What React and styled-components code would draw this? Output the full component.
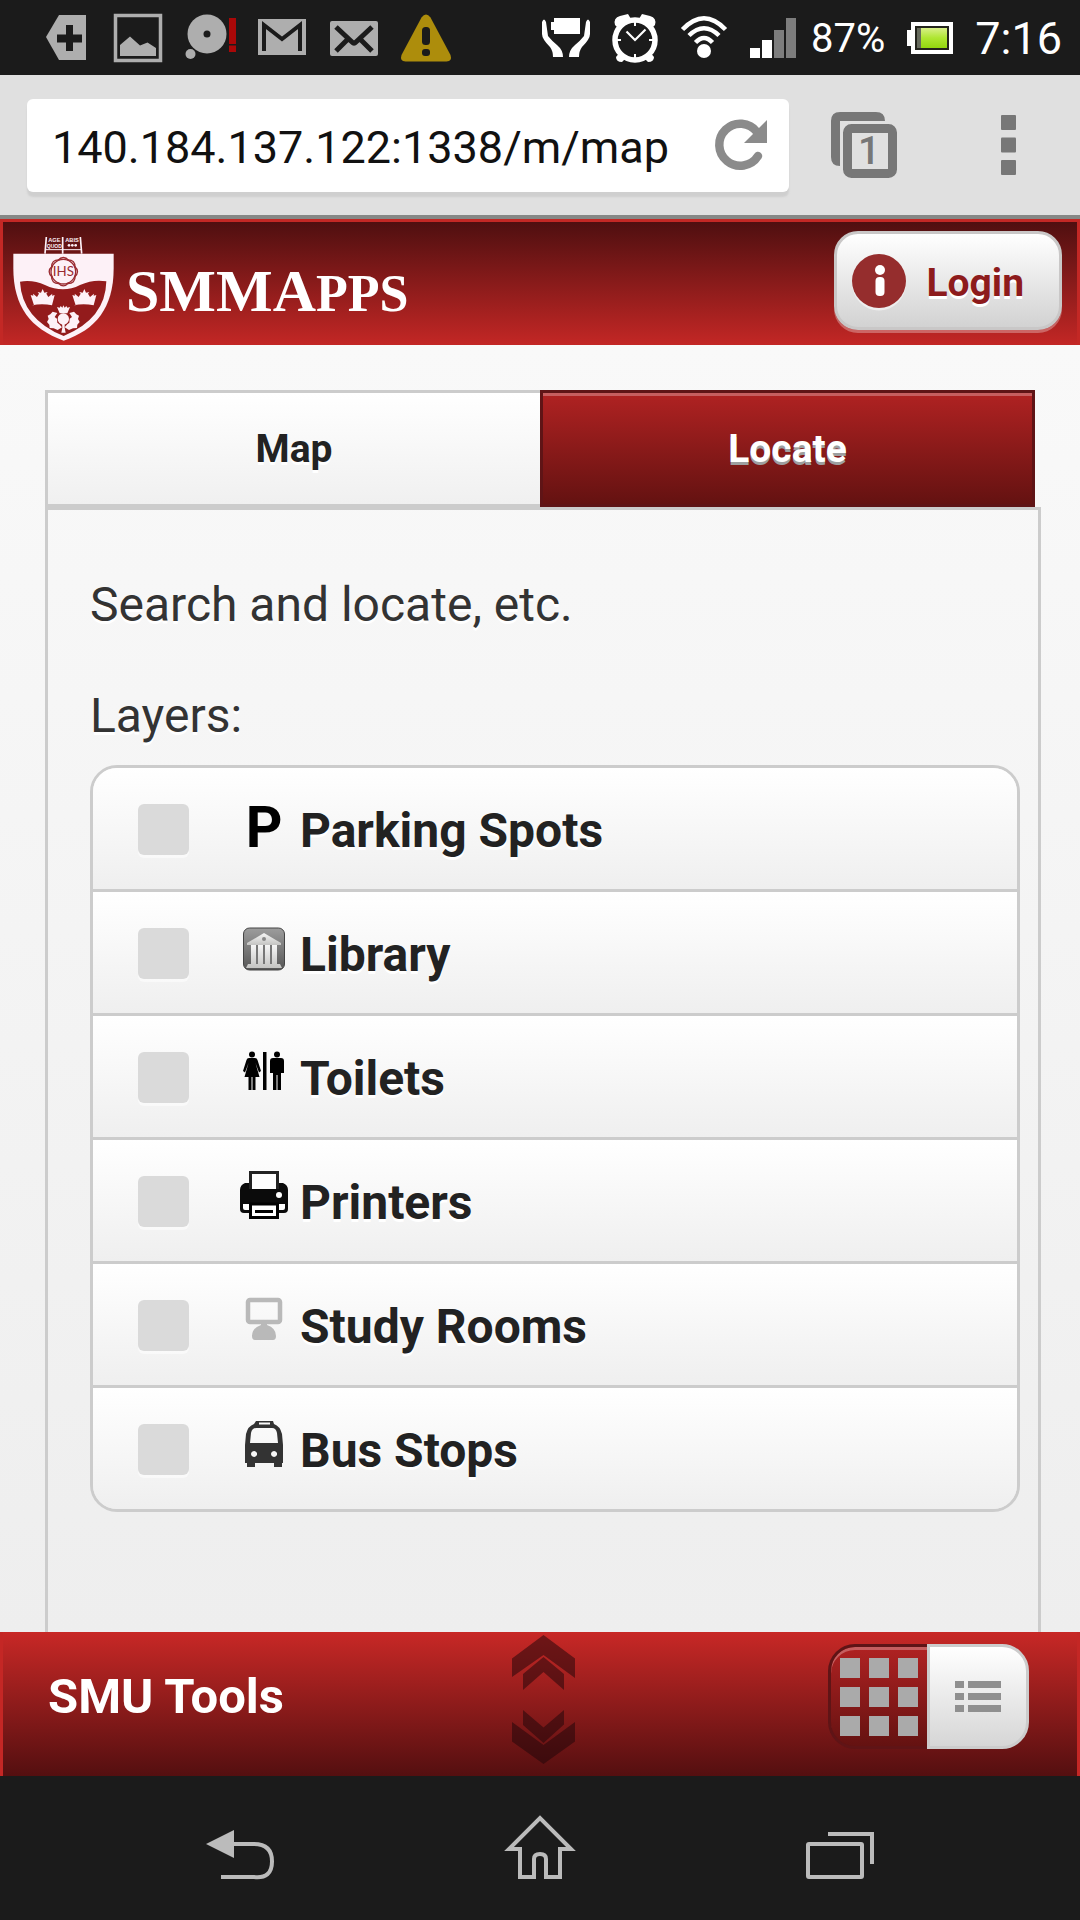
import React, { useState } from "react";
import styled, { createGlobalStyle, css } from "styled-components";

const GlobalStyle = createGlobalStyle`
  *, *::before, *::after { box-sizing: border-box; }
  body { margin: 0; background: #1b1b1b; font-family: Roboto, "Liberation Sans", sans-serif; }
  button, input { font: inherit; }
  button { border: 0; padding: 0; background: none; cursor: pointer; }
  svg { display: block; flex: none; overflow: visible; }
`;

const Screen = styled.div`
  display: flex;
  flex-direction: column;
  min-height: 100vh;
`;

/* ---------- system status bar ---------- */

const StatusBar = styled.header`
  display: flex;
  align-items: center;
  justify-content: space-between;
  height: 75px;
  padding: 0 18px 0 42px;
  background: #1b1b1b;
  color: #fff;
`;

const StatusGroup = styled.div`
  display: flex;
  align-items: center;
  gap: ${(p) => p.$gap}px;
`;

const StatusText = styled.span`
  font-size: ${(p) => p.$size}px;
  line-height: 60px;
  padding-top: 3px;
`;

/* ---------- browser bar ---------- */

const BrowserBar = styled.div`
  display: flex;
  align-items: center;
  height: 144px;
  padding: 0 64px 0 27px;
  background: #e0e0e0;
  border-bottom: 4px solid #868886;
`;

const UrlBox = styled.form`
  display: flex;
  align-items: center;
  flex: 1;
  min-width: 0;
  height: 93px;
  padding: 2px 22px 0 25px;
  margin-right: 42px;
  border-radius: 6px;
  background: #fff;
  box-shadow: 0 5px 2px #cfcfcf;
`;

const UrlInput = styled.input`
  flex: 1;
  min-width: 0;
  padding: 3px 0 0;
  border: 0;
  outline: 0;
  background: transparent;
  color: #111;
  font-size: 45px;
`;

const MenuButton = styled.button`
  margin-left: 104px;
`;

/* ---------- site header ---------- */

const SiteHeader = styled.header`
  display: flex;
  align-items: flex-start;
  justify-content: space-between;
  height: 126px;
  padding: 9px 15px 0 9px;
  border: 3px solid #c32825;
  border-bottom: 0;
  background: linear-gradient(#4f0f10, #c32725);
`;

const Brand = styled.a`
  display: flex;
  align-items: center;
  gap: 10px;
  padding-top: 5px;
  color: #fff;
  text-decoration: none;
`;

const BrandName = styled.span`
  font-family: "Liberation Serif", serif;
  font-weight: 700;
  font-size: 60px;
  line-height: 60px;
  padding-top: 6px;
`;

const SmallCaps = styled.span`
  font-size: 52px;
  text-transform: uppercase;
`;

const LoginButton = styled.button`
  display: flex;
  align-items: center;
  gap: 20px;
  height: 99px;
  padding: 4px 35px 0 15px;
  border: 3px solid #c9c7c7;
  border-radius: 24px;
  background: linear-gradient(#fff, #d2d2d2);
  box-shadow: 0 3px 0 rgba(255, 255, 255, 0.3);
  color: #8d1b1c;
  font-size: 39px;
  font-weight: 700;
  text-shadow: 0 3px 0 #fff;
`;

/* ---------- page ---------- */

const Page = styled.main`
  display: flex;
  flex-direction: column;
  flex: 1;
  padding-top: 45px;
  background: linear-gradient(#f9f9f9, #eee);
`;

const Tabs = styled.div`
  display: grid;
  grid-template-columns: 1fr 1fr;
  margin: 0 45px;
`;

const Tab = styled.button`
  height: 117px;
  border: 3px solid #ccc;
  border-right: 0;
  background: linear-gradient(#fff, #f0f0f0);
  color: #222;
  font-size: 39px;
  font-weight: 700;
  text-shadow: 0 3px 0 #fff;
  ${(p) =>
    p.$active &&
    css`
      border: 3px solid #5f1416;
      background: linear-gradient(#b02222, #641211);
      box-shadow: inset 0 3px 0 #c65e5f;
      color: #fff;
      text-shadow: 0 3px 0 #9d9fa0;
    `}
`;

const Panel = styled.section`
  flex: 1;
  margin: 0 39px 0 45px;
  padding: 63px 18px 48px 42px;
  border: 3px solid #ccc;
  border-bottom: 0;
`;

const Note = styled.p`
  margin: 0 0 ${(p) => p.$after}px;
  color: #333;
  font-size: 48px;
  line-height: 63px;
  text-shadow: 0 3px 0 #fff;
`;

const LayerList = styled.ul`
  margin: 0;
  padding: 0;
  overflow: hidden;
  list-style: none;
  border: 3px solid #ccc;
  border-radius: 27px;
`;

const LayerItem = styled.li`
  background: linear-gradient(#fff, #efefef);
  & + & {
    border-top: 3px solid #ccc;
  }
`;

const LayerLabel = styled.label`
  display: flex;
  align-items: center;
  gap: 51px;
  padding: 31px 45px 30px;
  color: #222;
  font-size: 48px;
  font-weight: 700;
  line-height: 57px;
  text-shadow: 0 3px 0 #fff;
`;

const LayerText = styled.span`
  display: flex;
  align-items: baseline;
  gap: 12px;
`;

const IconSlot = styled.span`
  display: inline-flex;
  justify-content: center;
  width: 48px;
`;

const ParkingMark = styled.span`
  color: #000;
  font-size: 57px;
  line-height: 57px;
  text-shadow: none;
`;

const Checkbox = styled.input`
  appearance: none;
  flex: none;
  width: 51px;
  height: 51px;
  margin: 0;
  border-radius: 6px;
  background: #dadada;
  box-shadow: 0 3px 0 rgba(255, 255, 255, 0.5);
  &:checked {
    background: #8d1b1c;
  }
`;

/* ---------- tools bar ---------- */

const ToolsBar = styled.footer`
  display: grid;
  grid-template-columns: 1fr auto 1fr;
  align-items: flex-start;
  height: 144px;
  padding: 0 48px 0 45px;
  border: solid #c42725;
  border-width: 0 3px;
  background: linear-gradient(#c82826, #540f10);
`;

const ToolsTitle = styled.h2`
  margin: 0;
  padding-top: 36px;
  color: #fff;
  font-size: 49px;
  line-height: 57px;
`;

const Expander = styled.button`
  padding: 3px 0 0 10px;
`;

const Toggle = styled.div`
  display: flex;
  justify-self: end;
  padding-top: 12px;
`;

const ToggleButton = styled.button`
  display: grid;
  place-items: center;
  height: 105px;
  border: 3px solid #ccc;
  width: 102px;
  border-radius: 0 27px 27px 0;
  background: linear-gradient(#fff, #d6d6d6);
  ${(p) =>
    p.$active &&
    css`
      width: 99px;
      border-color: #5f1416;
      border-right: 0;
      border-radius: 27px 0 0 27px;
      background: linear-gradient(#b02222, #641211);
      box-shadow: inset 0 3px 0 #c65e5f;
    `}
`;

/* ---------- system navigation ---------- */

const NavBar = styled.nav`
  display: grid;
  grid-template-columns: repeat(3, 1fr);
  justify-items: center;
  height: 144px;
  padding: 0 90px;
  background: #1b1b1b;
`;

/* ---------- icons ---------- */

const StatusSvg = ({ children, fill = "#aeaeae" }) => (
  <svg width="48" height="48" viewBox="0 0 48 48" fill={fill} aria-hidden="true">
    {children}
  </svg>
);

const TagIcon = () => (
  <StatusSvg>
    <path d="M4 23 17 1h27v45H17z" />
    <path d="M24 11h7v9.500h9v8h-9V37h-7v-8.500h-9v-8h9z" fill="#1b1b1b" />
  </StatusSvg>
);
const PictureIcon = () => (
  <StatusSvg>
    <path d="M1.500 1.500h45v45h-45z" fill="none" stroke="#aeaeae" strokeWidth="3.500" />
    <path d="M6 31l10-8.500 10 9 7.500-3L42 34v8H6z" />
  </StatusSvg>
);
const VoicemailIcon = () => (
  <StatusSvg>
    <circle cx="21" cy="20" r="19.500" />
    <circle cx="4.500" cy="40" r="5" />
    <circle cx="21" cy="20" r="3.500" fill="#1b1b1b" />
    <path d="M43 4h7v26h-7zM43 31.500h7V38h-7z" fill="#a90808" />
  </StatusSvg>
);
const GmailIcon = () => (
  <StatusSvg>
    <path d="M0 5h48v36H0z" />
    <path d="M6 37V11l18 14 18-14v26" fill="none" stroke="#1b1b1b" strokeWidth="4" />
  </StatusSvg>
);
const MailIcon = () => (
  <StatusSvg>
    <rect y="7" width="48" height="35" rx="2" />
    <path d="M6 13l16 15q2 2 4 0l16-15M6 37l12-12M42 37L30 25" fill="none" stroke="#1b1b1b" strokeWidth="5" />
  </StatusSvg>
);
const WarningIcon = () => (
  <StatusSvg fill="#ad8d0c">
    <path d="M19.500 3.500q4.500-6 9 0L48.500 41q2 6-4 6.500h-41q-6-.5-4-6.500z" />
    <rect x="20" y="13" width="8" height="18" rx="3.500" fill="#1b1b1b" />
    <rect x="20" y="35" width="8" height="7" rx="3" fill="#1b1b1b" />
  </StatusSvg>
);
const HandsIcon = () => (
  <StatusSvg fill="#fff">
    <path d="M12 4h26v16H12v-4H9V8h3z" />
    <path d="M0 8q2-5 4 0l2 14q4 5 9 9 6 5 6 12H11q0-6-3-10-8-8-8-13z" />
    <path d="M48 8q-2-5-4 0l-2 14q-4 5-9 9-6 5-6 12h10q0-6 3-10 8-8 8-13z" />
  </StatusSvg>
);
const AlarmIcon = () => (
  <StatusSvg fill="#fff">
    <path d="M4 11Q2 4 9 2l8-2 3 5L6 13zM44 11q2-7-5-9l-8-2-3 5 14 8zM5 43l5-6 7 5-6 6q-6 0-6-5zM43 43l-5-6-7 5 6 6q6 0 6-5z" />
    <circle cx="24" cy="26" r="20" fill="#1b1b1b" stroke="#fff" strokeWidth="5.500" />
    <path d="M24 8v4M24 40v4M6 26h4M38 26h4" stroke="#fff" strokeWidth="2" />
    <path d="M15.500 17.500 24 26l10.500-10.500" fill="none" stroke="#fff" strokeWidth="2.200" />
  </StatusSvg>
);
const WifiIcon = () => (
  <StatusSvg fill="none">
    <g stroke="#fff" strokeWidth="4.500">
      <path d="M2.500 15.500Q24-7 45.500 15.500" />
      <path d="M9 21.500q15-14.500 30 0" />
      <path d="M15.500 28.500q8.500-9 17 0" />
    </g>
    <circle cx="24" cy="37" r="7" fill="#fff" />
  </StatusSvg>
);
const SignalIcon = () => (
  <StatusSvg fill="#fff">
    <path d="M1 34h10v10H1zM13 26h10v18H13z" />
    <path d="M25 16h10v28H25zM37 4h10v40H37z" fill="#7d7d7d" />
  </StatusSvg>
);
const BatteryIcon = () => (
  <StatusSvg fill="#fff">
    <defs>
      <linearGradient id="charge" x1="0" y1="0" x2="0" y2="1">
        <stop offset="0" stopColor="#d8ef88" />
        <stop offset="0.5" stopColor="#aee631" />
        <stop offset="1" stopColor="#93d60e" />
      </linearGradient>
    </defs>
    <path d="M5 8h42v32H5v-8H1V16h4z" />
    <path d="M9 12h34v24H9z" fill="#23231c" />
    <path d="M11 14h4v20h-4z" fill="#666a5c" />
    <path d="M15 14h26v20H15z" fill="url(#charge)" />
  </StatusSvg>
);

const ReloadIcon = () => (
  <svg width="52" height="52" viewBox="0 0 52 52" aria-hidden="true">
    <path d="M42 12A21 21 0 1 0 43 36" fill="none" stroke="#8b8b8b" strokeWidth="8.500" strokeLinecap="round" />
    <path d="M52 0v23H29z" fill="#8b8b8b" />
  </svg>
);
const TabsIcon = () => (
  <svg width="66" height="66" viewBox="0 0 66 66" aria-hidden="true">
    <path d="M0 9Q0 0 9 0h36q9 0 9 9H9v45q-9 0-9-9z" fill="#777" />
    <rect x="16.500" y="16.500" width="45" height="45" rx="4" fill="none" stroke="#777" strokeWidth="9" />
    <text x="38" y="52" textAnchor="middle" fontFamily="Roboto" fontSize="39" fontWeight="500" fill="#777">1</text>
  </svg>
);
const DotsIcon = () => (
  <svg width="15" height="60" viewBox="0 0 15 60" fill="#777" aria-hidden="true">
    <rect width="15" height="15" rx="1" />
    <rect y="22.500" width="15" height="15" rx="1" />
    <rect y="45" width="15" height="15" rx="1" />
  </svg>
);

const Crown = ({ x }) => (
  <path
    transform={`translate(${x} 192)`}
    d="M11 49 1 18l8 2-1-6 12 10 6-10-4-5 10 2 5-11 5 11 10-2-4 5 6 10 12-10-1 6 8-2-8 31q-30-7-60 0z"
  />
);

const ShieldLogo = () => (
  <svg width="104" height="106" viewBox="36 33 312 318" aria-hidden="true">
    <g fill="none" stroke="#fdf1f7" strokeWidth="5">
      <path d="M139 36l-4 50M188 36v50M241 36l4 50" />
      <path d="M137 74h106" strokeWidth="3" />
    </g>
    <g fill="#fdf1f7" fontFamily="Liberation Sans" fontWeight="700" fontSize="17" textAnchor="middle">
      <text x="163" y="51">AGE</text>
      <text x="216" y="51">ABIS</text>
      <text x="163" y="69" fontSize="15">QUOD</text>
    </g>
    <g fill="#fdf1f7">
      <circle cx="207" cy="61" r="4" />
      <circle cx="217" cy="61" r="4" />
      <circle cx="227" cy="61" r="4" />
    </g>
    <path d="M40 86h301v44c0 120-55 185-150 217C92 312 40 245 40 130z" fill="#fdf1f7" />
    <path d="M60 170q40-6 75 10 55 26 105 0 40-18 79-11-2 112-128 164Q66 282 60 170z" fill="#931b1c" />
    <g fill="none" stroke="#9a2b31" strokeWidth="4">
      <circle cx="190" cy="140" r="37" />
      {[0, 45, 90, 135, 180, 225, 270, 315].map((a) => (
        <path key={a} d="M173 107q17-19 34 0" transform={`rotate(${a} 190 140)`} />
      ))}
    </g>
    <text x="190" y="154" textAnchor="middle" fontFamily="Lato" fontSize="40" fill="#9a2b31">IHS</text>
    <g fill="#fdf1f7">
      <Crown x={91} />
      <Crown x={216} />
      <path d="M171 246l8 2 3-5 5 5 3-7 4 7 5-5 3 5 8-2-8 19h-23z" />
      <circle cx="190" cy="282" r="17" />
      <path d="M186 292h8v16l3 15h-13l3-15z" />
      <path d="M172 264l-14-4-7 8-8 4 3 10-5 9 7 8 1 10 12 1 12 5 13-8-8-9-6-5-1-12-7-5z" />
      <path d="M208 264l14-4 7 8 8 4-3 10 5 9-7 8-1 10-12 1-12 5-13-8 8-9 6-5 1-12 7-5z" />
    </g>
  </svg>
);

const InfoIcon = () => (
  <svg width="54" height="57" viewBox="0 0 54 57" aria-hidden="true">
    <circle cx="27" cy="29.500" r="27" fill="#eee" />
    <circle cx="27" cy="27" r="27" fill="#952d2d" />
    <circle cx="28" cy="16" r="5" fill="#fff" />
    <rect x="23.500" y="23" width="9" height="19" rx="4" fill="#fff" />
  </svg>
);

const LayerSvg = ({ children }) => (
  <svg width="48" height="48" viewBox="0 0 48 48" aria-hidden="true">
    {children}
  </svg>
);
const LibraryIcon = () => (
  <LayerSvg>
    <defs>
      <linearGradient id="tile" x1="0" y1="0" x2="0" y2="1">
        <stop offset="0" stopColor="#9d9d9d" />
        <stop offset="1" stopColor="#565656" />
      </linearGradient>
      <linearGradient id="stone" x1="0" y1="0" x2="0" y2="1">
        <stop offset="0" stopColor="#f6f6f6" />
        <stop offset="1" stopColor="#c4c4c2" />
      </linearGradient>
    </defs>
    <rect x="3.500" y="5" width="41" height="42" rx="6" fill="url(#tile)" stroke="#444" />
    <path d="M24 10 41 20v2H7v-2z" fill="url(#stone)" />
    <path d="M11 22h26v19H11z" fill="#777" />
    <path d="M11 22h5v19h-5zM18 22h5v19h-5zM25 22h5v19h-5zM32 22h5v19h-5zM8 41h32l2 4H6z" fill="url(#stone)" />
    <circle cx="24" cy="16" r="2" fill="#888" />
  </LayerSvg>
);
const ToiletsIcon = () => (
  <LayerSvg>
    <circle cx="12" cy="7.500" r="3" />
    <path d="M9 11h6q2 0 2.500 2l3.500 11-2 1.500L15.500 16l4 14h-4v13h-3V30h-1v13h-3V30h-4l4-14L5 25.500 3 24l3.500-11Q7 11 9 11z" />
    <path d="M23 5h3.500v38H23z" />
    <circle cx="37" cy="7.500" r="3" />
    <path d="M33 11h8q3 0 3 3v12h-3V16v27h-3.500V28h-1v15H33V16v10h-3V14q0-3 3-3z" />
  </LayerSvg>
);
const PrinterIcon = () => (
  <LayerSvg>
    <path d="M10.500 18V1.500h27V18" fill="#fdfdfd" stroke="#222" strokeWidth="3" />
    <path d="M5 12h4v6h30v-6h4q5 2 5 7v19q0 4-4 4H4q-4 0-4-4V19q0-5 5-7z" fill="#0b0b0b" />
    <circle cx="39" cy="24" r="3" fill="#fff" />
    <path d="M3 33h6v6H5q-2 0-2-2zM45 33h-6v6h4q2 0 2-2z" fill="#fff" />
    <path d="M10.500 33h27v13.500h-27z" fill="#fff" stroke="#000" strokeWidth="3" />
    <path d="M15 39h18v3H15z" />
  </LayerSvg>
);
const StudyIcon = () => (
  <LayerSvg>
    <rect x="8" y="5" width="32" height="22" rx="2" fill="none" stroke="#b9b9b9" strokeWidth="4.500" />
    <path d="M21 28h6v2q9 3 9 11 0 4-3 4H15q-3 0-3-4 0-8 9-11z" fill="#b9b9b9" />
  </LayerSvg>
);
const BusIcon = () => (
  <LayerSvg>
    <path
      fillRule="evenodd"
      fill="#333"
      d="M16 2h17l1 3q6 2 8 10l1 11v18h-1v4h-8v-4H15v4H7v-4H5V26l1-11q2-8 8-10zM19 3.500v2h11v-2zM16 9q-4 0-5 5l-1 10h28l-1-10q-1-5-5-5zM14 32a3 3 0 1 0 .1 0zM34 32a3 3 0 1 0 .1 0z"
    />
  </LayerSvg>
);

const ChevronsIcon = () => (
  <svg width="64" height="130" viewBox="0 0 64 130" aria-hidden="true">
    <g fill="rgba(30,5,10,0.52)">
      <path d="M31.500 0 63 23.500V43L31.500 20 0 42V23.500z" />
      <path d="M31.500 22 52 39v16L31.500 37 11 55V39z" />
      <path d="M11 75l20.500 17.500L52 75v14.500L31.500 108 11 90z" />
      <path d="M0 87l31.500 23L63 87v19.500L31.500 129 0 106.500z" />
    </g>
  </svg>
);
const GridIcon = () => (
  <svg width="78" height="78" viewBox="0 0 78 78" fill="#aaa" aria-hidden="true">
    {[0, 29, 58].map((y) => [0, 29, 58].map((x) => <rect key={`${x}-${y}`} x={x} y={y} width="20" height="20" />))}
  </svg>
);
const ListIcon = () => (
  <svg width="46" height="32" viewBox="0 0 46 32" fill="#8f8f8f" aria-hidden="true">
    {[0, 12, 24].map((y) => (
      <path key={y} d={`M0 ${y}h9v7H0zM13 ${y}h33v7H13z`} />
    ))}
  </svg>
);

const NavSvg = ({ children }) => (
  <svg width="68" height="66" viewBox="0 0 68 66" fill="none" stroke="#bbb" strokeWidth="4" aria-hidden="true">
    {children}
  </svg>
);

const layers = [
  { name: "Parking Spots", icon: <ParkingMark aria-hidden="true">P</ParkingMark> },
  { name: "Library", icon: <LibraryIcon /> },
  { name: "Toilets", icon: <ToiletsIcon /> },
  { name: "Printers", icon: <PrinterIcon /> },
  { name: "Study Rooms", icon: <StudyIcon /> },
  { name: "Bus Stops", icon: <BusIcon /> },
];

export default function App() {
  const [tab, setTab] = useState("Locate");
  return (
    <Screen>
      <GlobalStyle />
      <StatusBar>
        <StatusGroup $gap={24}>
          <TagIcon />
          <PictureIcon />
          <VoicemailIcon />
          <GmailIcon />
          <MailIcon />
          <WarningIcon />
        </StatusGroup>
        <StatusGroup $gap={21}>
          <HandsIcon />
          <AlarmIcon />
          <WifiIcon />
          <StatusGroup $gap={14}>
            <SignalIcon />
            <StatusText $size={40}>87%</StatusText>
          </StatusGroup>
          <BatteryIcon />
          <StatusText $size={45}>7:16</StatusText>
        </StatusGroup>
      </StatusBar>

      <BrowserBar>
        <UrlBox onSubmit={(e) => e.preventDefault()}>
          <UrlInput aria-label="Address" defaultValue="140.184.137.122:1338/m/map" />
          <button type="button" aria-label="Reload"><ReloadIcon /></button>
        </UrlBox>
        <button type="button" aria-label="Open tabs"><TabsIcon /></button>
        <MenuButton type="button" aria-label="Menu"><DotsIcon /></MenuButton>
      </BrowserBar>

      <SiteHeader>
        <Brand href="#">
          <ShieldLogo />
          <BrandName>SMMA<SmallCaps>pps</SmallCaps></BrandName>
        </Brand>
        <LoginButton type="button">
          <InfoIcon />
          Login
        </LoginButton>
      </SiteHeader>

      <Page>
        <Tabs role="tablist">
          {["Map", "Locate"].map((name) => (
            <Tab key={name} type="button" role="tab" aria-selected={tab === name} $active={tab === name} onClick={() => setTab(name)}>
              {name}
            </Tab>
          ))}
        </Tabs>
        <Panel>
          <Note $after={48}>Search and locate, etc.</Note>
          <Note $after={18}>Layers:</Note>
          <LayerList>
            {layers.map((layer) => (
              <LayerItem key={layer.name}>
                <LayerLabel>
                  <Checkbox type="checkbox" />
                  <LayerText>
                    <IconSlot>{layer.icon}</IconSlot>
                    {layer.name}
                  </LayerText>
                </LayerLabel>
              </LayerItem>
            ))}
          </LayerList>
        </Panel>
      </Page>

      <ToolsBar>
        <ToolsTitle>SMU Tools</ToolsTitle>
        <Expander type="button" aria-label="Expand tools"><ChevronsIcon /></Expander>
        <Toggle>
          <ToggleButton type="button" aria-label="Grid view" $active><GridIcon /></ToggleButton>
          <ToggleButton type="button" aria-label="List view"><ListIcon /></ToggleButton>
        </Toggle>
      </ToolsBar>

      <NavBar>
        <button type="button" aria-label="Back">
          <NavSvg>
            <path d="M28 15v28L0 29z" fill="#bbb" stroke="none" />
            <path d="M27 29h21q18 0 18 17.500T48 62H15" />
          </NavSvg>
        </button>
        <button type="button" aria-label="Home">
          <NavSvg>
            <path d="M14 34H3L34 3l31 31H54v28H40V44q0-5-6-5t-6 5v18H14z" />
          </NavSvg>
        </button>
        <button type="button" aria-label="Recent apps">
          <NavSvg>
            <rect x="2" y="29" width="54" height="33" rx="1" />
            <path d="M22 19h44v30" />
          </NavSvg>
        </button>
      </NavBar>
    </Screen>
  );
}
